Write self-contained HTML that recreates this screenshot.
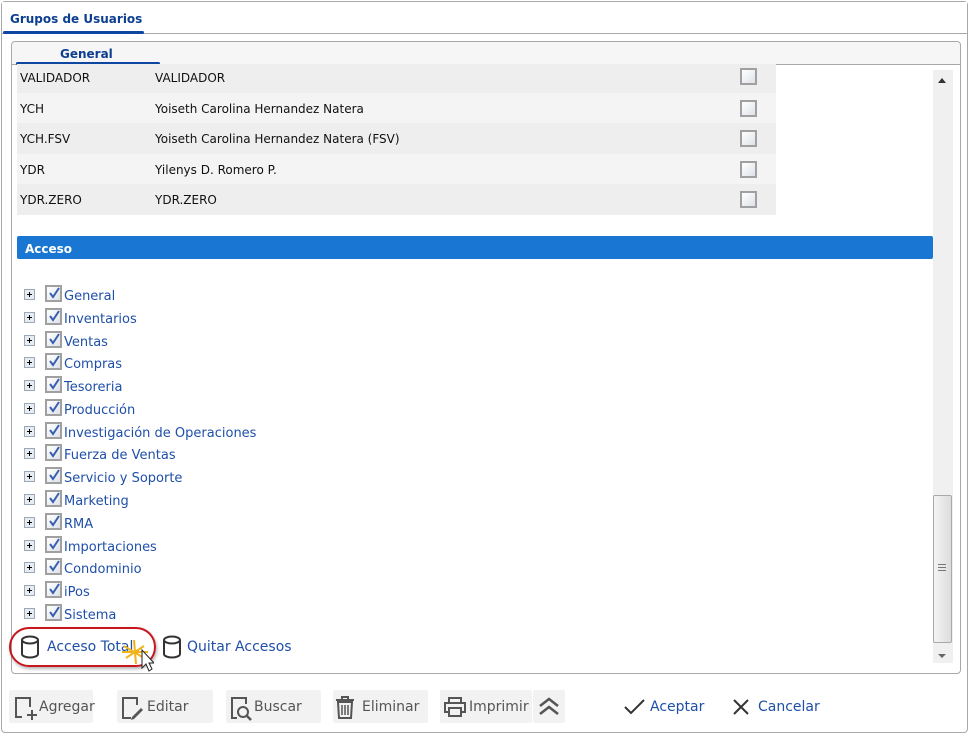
<!DOCTYPE html>
<html><head><meta charset="utf-8"><style>
*{margin:0;padding:0;box-sizing:border-box}
body{width:970px;height:735px;background:#fff;font-family:Verdana,"DejaVu Sans","Liberation Sans",sans-serif;position:relative;overflow:hidden}
.abs{position:absolute}
.outer{left:1px;top:1px;width:967px;height:732px;border:1px solid #a8a8a8;border-radius:4px;background:#fff}
.hdr{left:2px;top:2px;width:965px;height:32px;border-bottom:1px solid #a8a8a8;background:#fff}
.tab1{left:10px;top:12px;font-size:12px;font-weight:bold;color:#0d3f91}
.ul1{left:3px;top:31px;width:141px;height:3px;background:#0d47a1;border-radius:2px}
.inner{left:11px;top:41px;width:950px;height:633px;border:1px solid #a8a8a8;border-radius:4px;background:#fff}
.ihdr{left:12px;top:42px;width:948px;height:23px;background:#f6f6f6;border-bottom:1px solid #a8a8a8;border-radius:4px 4px 0 0}
.tab2{left:60px;top:47px;font-size:12px;font-weight:bold;color:#0d3f91}
.ul2{left:16px;top:62px;width:144px;height:3px;background:#0d47a1;border-radius:2px}
.row{left:17px;width:759px;height:31px;font-size:12px;color:#111}
.row span{position:absolute;top:9px}
.cb{position:absolute;left:723px;top:7px;width:17px;height:17px;border:2px solid #a0a0a0;background:linear-gradient(135deg,#fff,#dde2e8)}
.bar{left:17px;top:236px;width:916px;height:23px;background:#1976d2;color:#fff;font-size:12px;font-weight:bold;padding:6px 8px;border-radius:2px}
.item{left:24px;height:20px;font-size:13px;color:#1f4fa8}
.plus{position:absolute;left:0;top:1px;width:11px;height:11px;border:1px solid #9aa8b8;background:#e6ecf2}
.plus:before{content:"";position:absolute;left:2px;top:4px;width:5px;height:1px;background:#000}
.plus:after{content:"";position:absolute;left:4px;top:2px;width:1px;height:5px;background:#000}
.ck{position:absolute;left:21px;top:-3px;width:17px;height:17px;border:2px solid #a0a0a0;background:linear-gradient(135deg,#fff,#dde2e8)}
.ck svg{position:absolute;left:1px;top:0}
.item b{position:absolute;left:40px;top:1px;font-weight:normal;white-space:nowrap}
.sb{left:933px;top:70px;width:20px;height:593px;background:#f0f0f0}
.thumb{left:933px;top:495px;width:19px;height:148px;border:1px solid #a9a9a9;border-radius:2px;background:linear-gradient(90deg,#f4f4f4,#dcdcdc)}
.btn{top:690px;height:33px;background:#f2f2f2;border-radius:2px;font-size:14px;color:#555}
.btn span{position:absolute;top:9px}
.link{font-size:14px;color:#1f4fa8}
</style></head><body>
<div class="abs outer"></div>
<div class="abs hdr"></div>
<div class="abs tab1">Grupos de Usuarios</div>
<div class="abs ul1"></div>
<div class="abs inner"></div>
<div class="abs ihdr"></div>
<div class="abs tab2">General</div>
<div class="abs ul2"></div>

<div class="abs row" style="top:64px;height:29px;background:#eeeeee"><span style="left:3px;top:7px">VALIDADOR</span><span style="left:138px;top:7px">VALIDADOR</span><div class="cb" style="top:4px"></div></div>
<div class="abs row" style="top:93px;background:#f4f4f4"><span style="left:3px">YCH</span><span style="left:138px">Yoiseth Carolina Hernandez Natera</span><div class="cb"></div></div>
<div class="abs row" style="top:123px;background:#eeeeee"><span style="left:3px">YCH.FSV</span><span style="left:138px">Yoiseth Carolina Hernandez Natera (FSV)</span><div class="cb"></div></div>
<div class="abs row" style="top:154px;background:#f4f4f4"><span style="left:3px">YDR</span><span style="left:138px">Yilenys D. Romero P.</span><div class="cb"></div></div>
<div class="abs row" style="top:184px;background:#eeeeee"><span style="left:3px">YDR.ZERO</span><span style="left:138px">YDR.ZERO</span><div class="cb"></div></div>

<div class="abs bar">Acceso</div>

<div class="abs sb"></div>
<div class="abs" style="left:938px;top:78px;width:0;height:0;border-left:4px solid transparent;border-right:4px solid transparent;border-bottom:5px solid #333"></div>
<div class="abs thumb"></div>
<div class="abs" style="left:938px;top:564px;width:8px;height:7px;border-top:1px solid #777;border-bottom:1px solid #777"><div style="margin-top:2px;height:1px;background:#777"></div></div>
<div class="abs" style="left:938px;top:654px;width:0;height:0;border-left:4px solid transparent;border-right:4px solid transparent;border-top:4px solid #666"></div>

<div class="abs item" style="top:288px"><i class="plus"></i><i class="ck"><svg width="13" height="13"><path d="M2 6 L5 10 L11 1" stroke="#3a5fb0" stroke-width="2" fill="none"/></svg></i><b>General</b></div>
<div class="abs item" style="top:311px"><i class="plus"></i><i class="ck"><svg width="13" height="13"><path d="M2 6 L5 10 L11 1" stroke="#3a5fb0" stroke-width="2" fill="none"/></svg></i><b>Inventarios</b></div>
<div class="abs item" style="top:334px"><i class="plus"></i><i class="ck"><svg width="13" height="13"><path d="M2 6 L5 10 L11 1" stroke="#3a5fb0" stroke-width="2" fill="none"/></svg></i><b>Ventas</b></div>
<div class="abs item" style="top:356px"><i class="plus"></i><i class="ck"><svg width="13" height="13"><path d="M2 6 L5 10 L11 1" stroke="#3a5fb0" stroke-width="2" fill="none"/></svg></i><b>Compras</b></div>
<div class="abs item" style="top:379px"><i class="plus"></i><i class="ck"><svg width="13" height="13"><path d="M2 6 L5 10 L11 1" stroke="#3a5fb0" stroke-width="2" fill="none"/></svg></i><b>Tesoreria</b></div>
<div class="abs item" style="top:402px"><i class="plus"></i><i class="ck"><svg width="13" height="13"><path d="M2 6 L5 10 L11 1" stroke="#3a5fb0" stroke-width="2" fill="none"/></svg></i><b>Producción</b></div>
<div class="abs item" style="top:425px"><i class="plus"></i><i class="ck"><svg width="13" height="13"><path d="M2 6 L5 10 L11 1" stroke="#3a5fb0" stroke-width="2" fill="none"/></svg></i><b>Investigación de Operaciones</b></div>
<div class="abs item" style="top:447px"><i class="plus"></i><i class="ck"><svg width="13" height="13"><path d="M2 6 L5 10 L11 1" stroke="#3a5fb0" stroke-width="2" fill="none"/></svg></i><b>Fuerza de Ventas</b></div>
<div class="abs item" style="top:470px"><i class="plus"></i><i class="ck"><svg width="13" height="13"><path d="M2 6 L5 10 L11 1" stroke="#3a5fb0" stroke-width="2" fill="none"/></svg></i><b>Servicio y Soporte</b></div>
<div class="abs item" style="top:493px"><i class="plus"></i><i class="ck"><svg width="13" height="13"><path d="M2 6 L5 10 L11 1" stroke="#3a5fb0" stroke-width="2" fill="none"/></svg></i><b>Marketing</b></div>
<div class="abs item" style="top:516px"><i class="plus"></i><i class="ck"><svg width="13" height="13"><path d="M2 6 L5 10 L11 1" stroke="#3a5fb0" stroke-width="2" fill="none"/></svg></i><b>RMA</b></div>
<div class="abs item" style="top:539px"><i class="plus"></i><i class="ck"><svg width="13" height="13"><path d="M2 6 L5 10 L11 1" stroke="#3a5fb0" stroke-width="2" fill="none"/></svg></i><b>Importaciones</b></div>
<div class="abs item" style="top:561px"><i class="plus"></i><i class="ck"><svg width="13" height="13"><path d="M2 6 L5 10 L11 1" stroke="#3a5fb0" stroke-width="2" fill="none"/></svg></i><b>Condominio</b></div>
<div class="abs item" style="top:584px"><i class="plus"></i><i class="ck"><svg width="13" height="13"><path d="M2 6 L5 10 L11 1" stroke="#3a5fb0" stroke-width="2" fill="none"/></svg></i><b>iPos</b></div>
<div class="abs item" style="top:607px"><i class="plus"></i><i class="ck"><svg width="13" height="13"><path d="M2 6 L5 10 L11 1" stroke="#3a5fb0" stroke-width="2" fill="none"/></svg></i><b>Sistema</b></div>

<div class="abs" style="left:9px;top:627px;width:147px;height:40px;border:2px solid #c8161d;border-radius:20px;box-shadow:1px 2px 3px rgba(0,0,0,.3)"></div>
<svg class="abs" style="left:20px;top:635px" width="20" height="24"><ellipse cx="10" cy="5" rx="8" ry="3.5" fill="none" stroke="#333" stroke-width="2"/><path d="M2 5 V19 A8 3.5 0 0 0 18 19 V5" fill="none" stroke="#333" stroke-width="2"/></svg>
<div class="abs link" style="left:47px;top:639px">Acceso Total</div>
<svg class="abs" style="left:162px;top:635px" width="20" height="24"><ellipse cx="10" cy="5" rx="8" ry="3.5" fill="none" stroke="#333" stroke-width="2"/><path d="M2 5 V19 A8 3.5 0 0 0 18 19 V5" fill="none" stroke="#333" stroke-width="2"/></svg>
<div class="abs link" style="left:187px;top:639px">Quitar Accesos</div>
<svg class="abs" style="left:114px;top:632px" width="40" height="40"><path d="M10 14 L30 26 M12 26 L30 14 M20 8 L22 32 M8 20 L34 20" stroke="#f0b419" stroke-width="2"/><path d="M28 18 L28 36 L32 32 L35 39 L38 37 L35 31 L40 31 Z" fill="#fff" stroke="#222" stroke-width="1"/></svg>

<div class="abs btn" style="left:9px;width:84px"><svg class="abs" style="left:3px;top:5px" width="26" height="26"><path d="M10 22 H4 V3 H18 V12" fill="none" stroke="#555" stroke-width="2"/><path d="M20 15 V25 M15 20 H25" stroke="#555" stroke-width="2"/></svg><span style="left:30px">Agregar</span></div>
<div class="abs btn" style="left:117px;width:96px"><svg class="abs" style="left:2px;top:5px" width="26" height="26"><path d="M12 23 H4 V3 H18 V10" fill="none" stroke="#555" stroke-width="2"/><path d="M13 22 L22 13 L24 15 L15 24 L12 25 Z" fill="#555"/></svg><span style="left:30px">Editar</span></div>
<div class="abs btn" style="left:226px;width:95px"><svg class="abs" style="left:3px;top:5px" width="26" height="26"><path d="M8 23 H3 V3 H17 V9" fill="none" stroke="#555" stroke-width="2"/><circle cx="14" cy="17" r="5" fill="none" stroke="#555" stroke-width="2"/><path d="M18 21 L22 25" stroke="#555" stroke-width="2.5"/></svg><span style="left:28px">Buscar</span></div>
<div class="abs btn" style="left:333px;width:95px"><svg class="abs" style="left:0px;top:4px" width="24" height="26"><path d="M3 6 H21 M9 6 V3 H15 V6" fill="none" stroke="#555" stroke-width="2"/><path d="M5 8 H19 L18 24 H6 Z" fill="none" stroke="#555" stroke-width="2"/><path d="M9 11 V21 M12 11 V21 M15 11 V21" stroke="#555" stroke-width="1.5"/></svg><span style="left:29px">Eliminar</span></div>
<div class="abs btn" style="left:440px;width:92px"><svg class="abs" style="left:2px;top:5px" width="26" height="24"><path d="M7 7 V3 H19 V7" fill="none" stroke="#555" stroke-width="2"/><path d="M6 17 H3 V8 H23 V17 H20" fill="none" stroke="#555" stroke-width="2"/><path d="M7 13 H19 V21 H7 Z" fill="none" stroke="#555" stroke-width="2"/></svg><span style="left:29px">Imprimir</span></div>
<div class="abs btn" style="left:533px;width:32px"><svg class="abs" style="left:5px;top:6px" width="22" height="20"><path d="M2 10 L11 3 L20 10 M2 18 L11 11 L20 18" fill="none" stroke="#555" stroke-width="2.5"/></svg></div>
<svg class="abs" style="left:624px;top:698px" width="22" height="18"><path d="M1 9 L7 15 L20 2" fill="none" stroke="#333" stroke-width="2"/></svg>
<div class="abs link" style="left:650px;top:699px">Aceptar</div>
<svg class="abs" style="left:732px;top:698px" width="18" height="18"><path d="M2 2 L16 16 M16 2 L2 16" stroke="#333" stroke-width="2"/></svg>
<div class="abs link" style="left:758px;top:699px">Cancelar</div>
</body></html>
